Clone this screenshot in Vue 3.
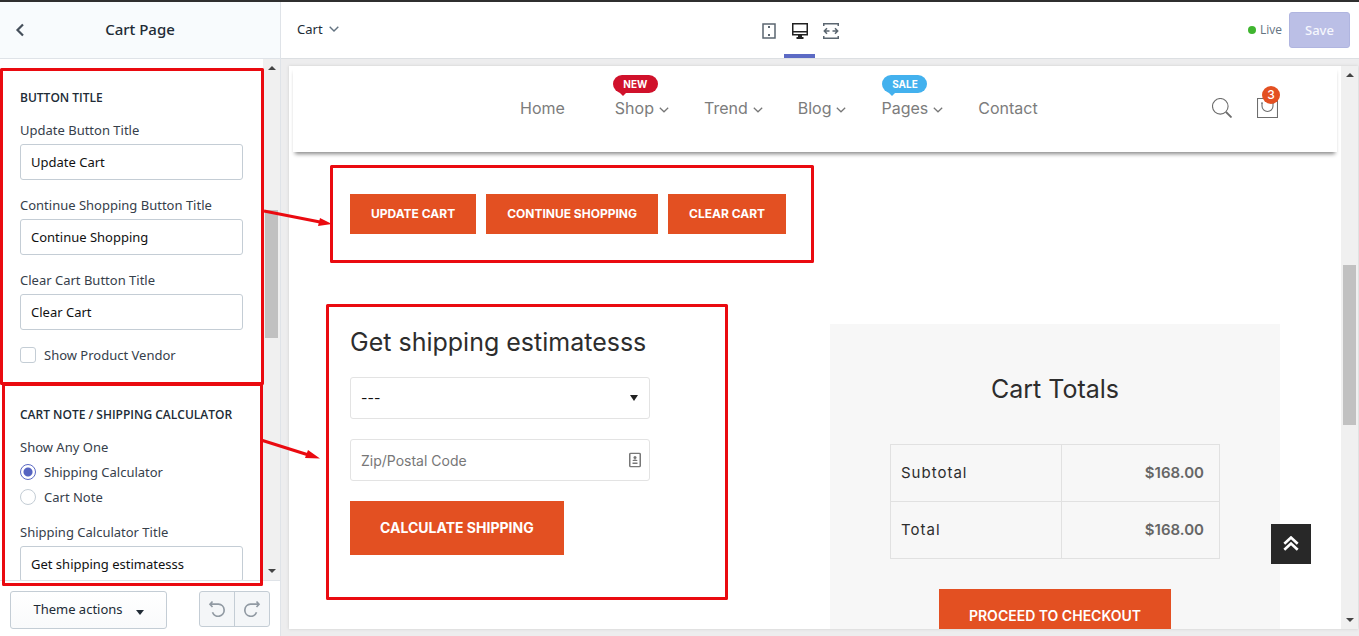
<script setup>
import { ref } from 'vue'

const buttonFields = [
  { id: 'update-title', label: 'Update Button Title', value: 'Update Cart' },
  { id: 'continue-title', label: 'Continue Shopping Button Title', value: 'Continue Shopping' },
  { id: 'clear-title', label: 'Clear Cart Button Title', value: 'Clear Cart' },
]
const choice = ref('calculator')
const vendor = ref(false)
const navItems = [
  { label: 'Home' },
  { label: 'Shop', menu: true, badge: 'NEW', tone: 'red' },
  { label: 'Trend', menu: true },
  { label: 'Blog', menu: true },
  { label: 'Pages', menu: true, badge: 'SALE', tone: 'blue' },
  { label: 'Contact' },
]
const cartButtons = ['UPDATE CART', 'CONTINUE SHOPPING', 'CLEAR CART']
const totals = [
  { label: 'Subtotal', amount: '$168.00' },
  { label: 'Total', amount: '$168.00' },
]
</script>

<template>
  <div class="editor">
    <aside class="sidebar">
      <header class="side-head">
        <button class="back" aria-label="Back">
          <svg width="10" height="14" viewBox="0 0 10 14"><path d="M8 1.5 2.5 7 8 12.5" fill="none" stroke="#454f5b" stroke-width="2.2" /></svg>
        </button>
        <h1>Cart Page</h1>
      </header>

      <div class="side-body">
        <div class="settings">
          <section class="group">
            <h2>BUTTON TITLE</h2>
            <div v-for="f in buttonFields" :key="f.id" class="field">
              <label :for="f.id">{{ f.label }}</label>
              <input :id="f.id" type="text" :value="f.value" />
            </div>
            <label class="option"><input v-model="vendor" type="checkbox" />Show Product Vendor</label>
          </section>
          <section class="group">
            <h2>CART NOTE / SHIPPING CALCULATOR</h2>
            <fieldset class="field">
              <legend>Show Any One</legend>
              <label class="option"><input v-model="choice" type="radio" name="choice" value="calculator" />Shipping Calculator</label>
              <label class="option"><input v-model="choice" type="radio" name="choice" value="note" />Cart Note</label>
            </fieldset>
            <div class="field">
              <label for="calc-title">Shipping Calculator Title</label>
              <input id="calc-title" type="text" value="Get shipping estimatesss" />
            </div>
          </section>
        </div>
        <div class="scrollbar">
          <svg width="8" height="4" viewBox="0 0 8 4"><path d="M0 4 4 0 8 4z" fill="#444" /></svg>
          <div class="track"><div class="thumb side-thumb"></div></div>
          <svg width="8" height="4" viewBox="0 0 8 4"><path d="M0 0 4 4 8 0z" fill="#444" /></svg>
        </div>
      </div>

      <footer class="side-foot">
        <button class="theme-actions">Theme actions
          <svg width="8" height="5" viewBox="0 0 8 5"><path d="M0 0h8L4 5z" fill="#212b36" /></svg>
        </button>
        <div class="history">
          <button aria-label="Undo">
            <svg width="18" height="18" viewBox="0 0 18 18" fill="none" stroke="#919aa3" stroke-width="1.7"><path d="M4.500 1.500 2 4.200 4.500 7M2 4.200H10.500a6 6 0 1 1-6 8" /></svg>
          </button>
          <button aria-label="Redo">
            <svg width="18" height="18" viewBox="0 0 18 18" fill="none" stroke="#919aa3" stroke-width="1.7"><path d="M13.500 1.500 16 4.200 13.500 7M16 4.200H7.500a6 6 0 1 0 6 8" /></svg>
          </button>
        </div>
      </footer>
    </aside>

    <main class="stage">
      <header class="topbar">
        <button class="page-pick">Cart
          <svg width="10" height="6" viewBox="0 0 10 6"><path d="M.7.7 5 5 9.300.7" fill="none" stroke="#637381" stroke-width="1.4" /></svg>
        </button>
        <div class="devices">
          <button aria-label="Mobile">
            <svg width="14" height="16" viewBox="0 0 14 16"><path d="M1 1h12v14H1z" fill="none" stroke="#5b6670" stroke-width="1.500" /><path d="M6 3h2v2H6zM6 11h2v2H6z" fill="#5b6670" /></svg>
          </button>
          <button class="active" aria-label="Desktop">
            <svg width="16" height="16" viewBox="0 0 16 16"><path d="M.75.75h14.500v11H.75zM.75 8.750h14.500" fill="none" stroke="#212121" stroke-width="1.500" /><path d="M6 12h4v2h1.500v2h-7v-2H6z" fill="#212121" /></svg>
          </button>
          <button aria-label="Full width">
            <svg width="16" height="16" viewBox="0 0 16 16" fill="none" stroke="#5b6670" stroke-width="1.500"><path d="M.75 3V.75h14.500V3M.75 13v2.250h14.500V13M6.500 8h-5M4 5.200 1.300 8 4 10.800M9.500 8h5M12 5.200 14.700 8 12 10.800" /></svg>
          </button>
        </div>
        <div class="save-area">
          <span class="dot"></span><span class="live">Live</span>
          <button class="save">Save</button>
        </div>
      </header>

      <div class="preview">
        <div class="frame">
          <div class="site">
            <header class="site-head">
              <div class="wrap head-row">
                <nav>
                  <a v-for="n in navItems" :key="n.label" href="#" :class="{ plain: !n.menu }">
                    {{ n.label }}
                    <svg v-if="n.menu" width="10" height="6" viewBox="0 0 10 6"><path d="M.8.7 5 4.800 9.200.7" fill="none" stroke="#777" stroke-width="1.200" /></svg>
                    <span v-if="n.badge" class="badge" :class="n.tone">{{ n.badge }}</span>
                  </a>
                </nav>
                <div class="tools">
                  <button aria-label="Search">
                    <svg width="20" height="20" viewBox="0 0 20 20" fill="none" stroke="#6d6d6d"><circle cx="8.300" cy="8.300" r="7.800" stroke-width="1.100" /><path d="m14 14 5.500 5.500" stroke-width="1.800" /></svg>
                  </button>
                  <button class="bag" aria-label="Cart">
                    <svg width="21" height="20" viewBox="0 0 21 20" fill="none" stroke="#6d6d6d" stroke-width="1.100"><path d="M.5.5h20v19H.5zM5 5v3a5.500 5.500 0 0 0 11 0V5M4 5h2M15 5h2" /></svg>
                    <span class="count">3</span>
                  </button>
                </div>
              </div>
            </header>

            <div class="wrap content">
              <div class="cart-buttons">
                <button v-for="b in cartButtons" :key="b" class="cta small">{{ b }}</button>
              </div>
              <div class="columns">
                <section class="estimate">
                  <h2>Get shipping estimatesss</h2>
                  <div class="control">
                    <select aria-label="Country"><option>---</option></select>
                    <svg width="8" height="6" viewBox="0 0 8 6"><path d="M0 0h8L4 6z" fill="#222" /></svg>
                  </div>
                  <div class="control">
                    <input type="text" placeholder="Zip/Postal Code" aria-label="Zip/Postal Code" />
                    <svg width="12" height="15" viewBox="0 0 12 15"><rect x=".75" y=".75" width="10.500" height="13.500" rx="1" fill="none" stroke="#777" stroke-width="1.500" /><circle cx="6" cy="5" r="1.500" fill="#777" /><path d="M3.500 8.500C3.500 6.500 8.500 6.500 8.500 8.500zM3.500 10h5v1.500h-5z" fill="#777" /></svg>
                  </div>
                  <button class="cta">CALCULATE SHIPPING</button>
                </section>
                <section class="totals">
                  <h2>Cart Totals</h2>
                  <table>
                    <tbody>
                      <tr v-for="t in totals" :key="t.label"><th scope="row">{{ t.label }}</th><td>{{ t.amount }}</td></tr>
                    </tbody>
                  </table>
                  <button class="cta">PROCEED TO CHECKOUT</button>
                </section>
              </div>
            </div>
            <button class="to-top" aria-label="Back to top">
              <svg width="16" height="16" viewBox="0 0 16 16" fill="none" stroke="#fff" stroke-width="2.600"><path d="m1.300 7.800 6.700-6.300 6.700 6.300M1.300 13.800 8 7.500l6.700 6.300" /></svg>
            </button>
          </div>
          <div class="scrollbar">
            <svg width="8" height="4" viewBox="0 0 8 4"><path d="M0 4 4 0 8 4z" fill="#444" /></svg>
            <div class="track"><div class="thumb frame-thumb"></div></div>
            <svg width="8" height="4" viewBox="0 0 8 4"><path d="M0 0 4 4 8 0z" fill="#444" /></svg>
          </div>
        </div>
      </div>
    </main>

    <svg class="notes" width="820" height="610" viewBox="0 0 820 610" fill="none" stroke="#ea0a10" stroke-width="3" stroke-linejoin="round">
      <rect x="1.500" y="69.500" width="261" height="314" />
      <rect x="3.500" y="384.500" width="258" height="200" />
      <rect x="331.500" y="166.500" width="481" height="95" />
      <rect x="327.500" y="305.500" width="399" height="293" />
      <path d="M264 211 320 222M261 440l46 14.500" />
      <path d="m332 224-14 2 2-8zM320 458.500l-15-.5 3-8z" fill="#ea0a10" stroke="none" />
    </svg>
  </div>
</template>

<style>
body { margin: 0; background: #fff; }
</style>

<style scoped>
* { box-sizing: border-box; }
h1, h2 { margin: 0; }
button { font: inherit; color: inherit; border: 0; background: none; padding: 0; }
svg { display: block; flex: none; }

.editor {
  position: relative;
  display: flex;
  height: 100vh;
  overflow: hidden;
  border-top: 2px solid #2f2f2f;
  font: 13px/20px "Noto Sans", "Open Sans", sans-serif;
  color: #212b36;
}
.sidebar { width: 281px; flex: none; display: flex; flex-direction: column; border-right: 1px solid #dfe3e8; }
.side-head { height: 57px; flex: none; display: flex; align-items: center; padding: 0 15px; background: #f8fbfd; border-bottom: 1px solid #dfe3e8; }
.side-head h1 { flex: 1; margin-right: 10px; padding-bottom: 2px; text-align: center; font-size: 15px; font-weight: 500; }
.side-body { flex: 1; min-height: 0; display: flex; }
.settings { flex: 1; overflow: hidden; padding-top: 8px; }
.group { padding: 21px 20px 18px; border-bottom: 1px solid #dfe3e8; }
.group h2 { margin-bottom: 12px; font: 600 12px/20px "Open Sans", sans-serif; white-space: nowrap; }
.field { margin: 0 0 15px; padding: 0; border: 0; color: #36404b; }
.field > label { display: block; }
.field legend { padding: 0; margin-bottom: 5px; }
.field input[type='text'] { display: block; width: 100%; height: 36px; margin-top: 4px; padding: 0 10px; border: 1px solid #c4cdd5; border-radius: 3px; font: inherit; color: #111; background: #fff; }
.option, .field .option { display: flex; align-items: center; gap: 8px; color: #36404b; }
.field .option + .option { margin-top: 5px; }
.option input { appearance: none; width: 16px; height: 16px; margin: 0; border: 1px solid #c4cdd5; border-radius: 3px; background: #fff; }
.option input[type='radio'] { border-radius: 50%; }
.option input[type='radio']:checked { border-color: #5c6ac4; background: radial-gradient(circle, #5563c1 4px, #fff 5px); }

.scrollbar { width: 17px; flex: none; display: flex; flex-direction: column; align-items: center; padding: 7px 0; background: #f0f0f0; }
.track { flex: 1; width: 13px; }
.thumb { background: #c1c1c1; }
.side-thumb { height: 128px; margin-top: 140px; }
.frame-thumb { height: 160px; margin-top: 188px; }

.side-foot { height: 56px; flex: none; display: flex; align-items: flex-start; justify-content: space-between; padding: 10px 10px 0; border-top: 1px solid #dfe3e8; }
.theme-actions { display: flex; align-items: center; justify-content: center; gap: 13px; width: 157px; height: 38px; padding-bottom: 2px; border: 1px solid #c4cdd5; border-radius: 3px; background: linear-gradient(#fff, #f9fafb); }
.theme-actions svg { margin-top: 6px; }
.history { display: flex; border: 1px solid #c4cdd5; border-radius: 3px; background: #f4f6f8; }
.history button { width: 34px; height: 34px; display: grid; place-items: center; }
.history button + button { width: 35px; border-left: 1px solid #c4cdd5; }

.stage { flex: 1; min-width: 0; display: flex; flex-direction: column; }
.topbar { height: 57px; flex: none; display: flex; justify-content: space-between; align-items: center; padding: 0 9px 0 16px; border-bottom: 1px solid #dcdfe2; }
.page-pick { display: flex; align-items: center; gap: 6px; padding: 0 13px 2px 0; }
.devices { display: flex; align-self: stretch; }
.devices button { width: 31px; display: grid; place-items: center; padding-top: 2px; border-bottom: 4px solid transparent; border-top: 4px solid transparent; }
.devices .active { border-bottom-color: #5c6ac4; }
.save-area { display: flex; align-items: center; }
.dot { width: 8px; height: 8px; border-radius: 50%; background: #3fb52f; }
.live { margin: 0 7px 0 4px; font: 12px/20px "Open Sans", sans-serif; color: #637381; }
.save { width: 61px; height: 36px; border: 1px solid #b0b5e0; border-radius: 3px; background: #bbbfe6; color: #f6f7fd; font-weight: 500; }

.preview { flex: 1; min-height: 0; padding: 7px 1px 7px 8px; background: #ededee; }
.frame { display: flex; height: 100%; background: #fff; box-shadow: 0 0 3px #ccc; }
.site { position: relative; flex: 1; min-width: 0; overflow: hidden; font-family: "Inter", "Liberation Sans", sans-serif; color: #2d2d2d; }
.wrap { width: 930px; max-width: 100%; margin: 0 auto; }
.site-head { height: 86px; margin: 0 4px; background: #fff; box-shadow: 0 4px 4px -2px #888; }
.head-row { display: flex; height: 100%; align-items: center; justify-content: space-between; padding: 0 2px 2px 170px; }
nav { display: flex; gap: 35px; }
nav a { position: relative; display: flex; align-items: center; gap: 5px; font-size: 16px; line-height: 24px; color: #7c7c7c; text-decoration: none; font-weight: 400; }
nav .plain { padding-right: 15px; }
nav svg { margin-top: 4px; }
.badge { position: absolute; left: -2px; bottom: 27px; width: 45px; border-radius: 9px; color: #fff; font-size: 10px; line-height: 18px; font-weight: 700; text-align: center; }
.badge::after { content: ''; position: absolute; left: 6px; top: 17px; border: 4px solid transparent; border-top-color: inherit; }
.red { background: #d0112b; border-color: #d0112b; }
.blue { left: 1px; background: #43b1ee; border-color: #43b1ee; }
.badge.red::after { border-top-color: #d0112b; }
.badge.blue::after { border-top-color: #43b1ee; }
.tools { display: flex; gap: 25px; }
.bag { position: relative; }
.count { position: absolute; left: 5px; top: -12px; width: 18px; height: 18px; border-radius: 50%; background: #e35022; color: #fff; font-size: 12px; line-height: 18px; font-weight: 500; }

.content { padding-top: 42px; }
.cart-buttons { display: flex; gap: 10px; }
.cta { height: 54px; padding: 0 30px; background: #e35022; color: #fff; font-size: 14px; font-weight: 600; white-space: nowrap; }
.estimate .cta { font-weight: 700; }
.cta.small { height: 40px; padding: 0 21px; font-size: 12px; font-weight: 700; }
.columns { display: flex; justify-content: space-between; align-items: flex-start; margin-top: 90px; }
.columns h2 { font-size: 25px; line-height: 36px; font-weight: 400; white-space: nowrap; }
.estimate { width: 300px; }
.estimate h2 { margin-bottom: 17px; }
.control { position: relative; margin-bottom: 20px; }
.control select, .control input { appearance: none; display: block; width: 100%; height: 42px; padding: 0 10px; border: 1px solid #e3e3e3; border-radius: 3px; background: #fff; color: #111; font: 14px/20px "Inter", "Liberation Sans", sans-serif; }
.control input::placeholder { color: #777; opacity: 1; }
.control svg { position: absolute; right: 9px; top: 50%; transform: translateY(-50%); pointer-events: none; }
.control select + svg { right: 12px; }
.totals { width: 450px; padding: 47px 60px 0; height: 400px; background: #f7f7f7; text-align: center; }
table { width: 100%; margin: 37px 0 30px; border-collapse: collapse; table-layout: fixed; }
th, td { height: 57px; padding: 0 15px 0 10px; border: 1px solid #e1e1e1; font-size: 15px; }
th { width: 52%; text-align: left; font-weight: 400; letter-spacing: 1px; }
td { text-align: right; font-weight: 600; color: #666; }
.to-top { position: absolute; right: 30px; bottom: 65px; width: 40px; height: 40px; display: grid; place-items: center; background: #282828; }
.notes { position: absolute; left: 0; top: -2px; pointer-events: none; }
</style>
